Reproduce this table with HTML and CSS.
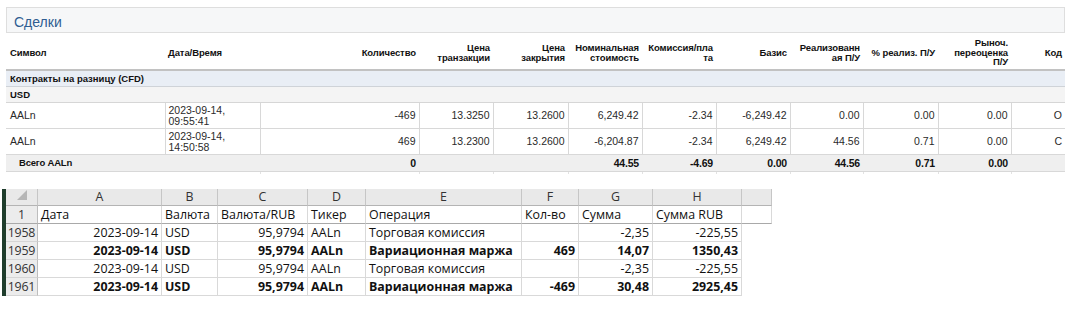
FILE: index.html
```html
<!DOCTYPE html>
<html lang="ru">
<head>
<meta charset="utf-8">
<title>Сделки</title>
<link rel="stylesheet" href="styles.css">
</head>
<body>
<section class="report">
  <div class="title">Сделки</div>
  <table class="deals">
    <colgroup>
      <col class="c-sym"><col class="c-date"><col class="c-qty"><col class="c-74"><col class="c-75"><col class="c-74"><col class="c-74"><col class="c-74"><col class="c-73"><col class="c-75"><col class="c-73"><col class="c-code">
    </colgroup>
    <thead>
      <tr>
        <th class="l">Символ</th>
        <th class="l">Дата/Время</th>
        <th>Количество</th>
        <th>Цена<br>транзакции</th>
        <th>Цена<br>закрытия</th>
        <th>Номинальная<br>стоимость</th>
        <th>Комиссия/пла<br>та</th>
        <th>Базис</th>
        <th>Реализованн<br>ая П/У</th>
        <th>% реализ. П/У</th>
        <th>Рыноч.<br>переоценка<br>П/У</th>
        <th>Код</th>
      </tr>
    </thead>
    <tbody>
      <tr class="asset"><td colspan="12">Контракты на разницу (CFD)</td></tr>
      <tr class="cur"><td colspan="12">USD</td></tr>
      <tr class="row">
        <td class="l">AALn</td>
        <td class="l date">2023-09-14,<br>09:55:41</td>
        <td>-469</td>
        <td>13.3250</td>
        <td>13.2600</td>
        <td>6,249.42</td>
        <td>-2.34</td>
        <td>-6,249.42</td>
        <td>0.00</td>
        <td>0.00</td>
        <td>0.00</td>
        <td>O</td>
      </tr>
      <tr class="row">
        <td class="l">AALn</td>
        <td class="l date">2023-09-14,<br>14:50:58</td>
        <td>469</td>
        <td>13.2300</td>
        <td>13.2600</td>
        <td>-6,204.87</td>
        <td>-2.34</td>
        <td>6,249.42</td>
        <td>44.56</td>
        <td>0.71</td>
        <td>0.00</td>
        <td>C</td>
      </tr>
      <tr class="total">
        <td class="l ind">Всего AALn</td>
        <td></td>
        <td>0</td>
        <td></td>
        <td></td>
        <td>44.55</td>
        <td>-4.69</td>
        <td>0.00</td>
        <td>44.56</td>
        <td>0.71</td>
        <td>0.00</td>
        <td></td>
      </tr>
      <tr class="tail"><td></td><td></td><td></td><td></td><td></td><td></td><td></td><td></td><td></td><td></td><td></td><td></td></tr>
    </tbody>
  </table>
</section>

<section class="sheet">
  <div class="grid">
    <div class="hd corner"><svg width="10" height="10" viewBox="0 0 10 10"><polygon points="10,0 10,10 0,10" fill="#b6b6b6"/></svg></div>
    <div class="hd">A</div><div class="hd">B</div><div class="hd">C</div><div class="hd">D</div><div class="hd">E</div><div class="hd">F</div><div class="hd">G</div><div class="hd">H</div><div class="hd"></div>

    <div class="rn frz">1</div>
    <div class="cell frz">Дата</div><div class="cell frz">Валюта</div><div class="cell frz">Валюта/RUB</div><div class="cell frz">Тикер</div><div class="cell frz">Операция</div><div class="cell frz">Кол-во</div><div class="cell frz">Сумма</div><div class="cell frz">Сумма RUB</div><div class="cell frz"></div>

    <div class="rn">1958</div>
    <div class="cell r">2023-09-14</div><div class="cell">USD</div><div class="cell r">95,9794</div><div class="cell">AALn</div><div class="cell">Торговая комиссия</div><div class="cell r"></div><div class="cell r">-2,35</div><div class="cell r">-225,55</div><div class="blank"></div>

    <div class="rn">1959</div>
    <div class="cell r b">2023-09-14</div><div class="cell b">USD</div><div class="cell r b">95,9794</div><div class="cell b">AALn</div><div class="cell b">Вариационная маржа</div><div class="cell r b">469</div><div class="cell r b">14,07</div><div class="cell r b">1350,43</div><div class="blank"></div>

    <div class="rn">1960</div>
    <div class="cell r">2023-09-14</div><div class="cell">USD</div><div class="cell r">95,9794</div><div class="cell">AALn</div><div class="cell">Торговая комиссия</div><div class="cell r"></div><div class="cell r">-2,35</div><div class="cell r">-225,55</div><div class="blank"></div>

    <div class="rn">1961</div>
    <div class="cell r b">2023-09-14</div><div class="cell b">USD</div><div class="cell r b">95,9794</div><div class="cell b">AALn</div><div class="cell b">Вариационная маржа</div><div class="cell r b">-469</div><div class="cell r b">30,48</div><div class="cell r b">2925,45</div><div class="blank"></div>
  </div>
</section>
</body>
</html>
```

FILE: styles.css
```css
* { box-sizing: border-box; }

body {
  margin: 0;
  background: #fff;
  font-family: "Liberation Sans", Arial, sans-serif;
  color: #1a1a1a;
}

/* ---------- report (top) ---------- */
.report {
  padding: 7px 0 0 6px;
  width: 1065px;
}

.title {
  height: 26px;
  padding: 5px 7px 0;
  border: 1px solid #dedede;
  background: #f6f7f8;
  color: #2f5d91;
  font-size: 14px;
  line-height: 19px;
}

.deals {
  width: 1059px;
  border-collapse: collapse;
  table-layout: fixed;
  font-size: 10.5px;
}

.c-sym { width: 159px; }
.c-date { width: 95px; }
.c-qty { width: 159px; }
.c-74 { width: 74px; }
.c-75 { width: 75px; }
.c-73 { width: 73px; }
.c-code { width: 54px; }

.deals th {
  height: 37px;
  padding: 3px 3px 0;
  font-size: 9.5px;
  font-weight: bold;
  line-height: 9.5px;
  text-align: right;
  vertical-align: middle;
  color: #111;
  letter-spacing: -0.1px;
  border-bottom: 2px solid #c2c2c2;
  white-space: nowrap;
}

.deals th.l { text-align: left; }
.deals th:first-child { padding-left: 4px; }

.deals td {
  padding: 0 3px;
  text-align: right;
  vertical-align: middle;
  white-space: nowrap;
}

.deals td.l { text-align: left; }

.asset td {
  height: 16px;
  background: #e9eef5;
  border-bottom: 1px solid #cfd3d8;
  font-size: 9.5px;
  font-weight: bold;
  text-align: left;
  padding-left: 4px;
  color: #111;
}

.cur td {
  height: 16px;
  background: #f4f4f4;
  border-bottom: 1px solid #d6d6d6;
  font-size: 9.5px;
  font-weight: bold;
  text-align: left;
  padding-left: 4px;
  color: #111;
}

.row td {
  height: 26px;
  border-bottom: 1px solid #d8d8d8;
  border-right: 1px solid #d8d8d8;
  color: #2a2a2a;
}

.row td:last-child { border-right: none; }
.row td:first-child { padding-left: 4px; }

.row td.date {
  line-height: 11px;
  padding-top: 1px;
}

.total td {
  height: 17px;
  background: #efefef;
  border-bottom: 1px solid #d8d8d8;
  font-size: 10.5px;
  font-weight: bold;
  color: #111;
  letter-spacing: -0.2px;
}

.total td.ind { padding-left: 13px; font-size: 9.5px; }

.tail td {
  height: 3px;
  padding: 0;
  border-right: 1px solid #e2e2e2;
}
.tail td:first-child { border-right: none; }
.tail td:last-child { border-right: none; }

/* ---------- spreadsheet (bottom) ---------- */
.sheet {
  margin: 15px 0 0 2px;
  display: flex;
}

.grid {
  display: grid;
  grid-template-columns: 32px 124px 56px 90px 58px 156px 57px 74px 89px 30px;
  grid-template-rows: 17px repeat(5, 18px);
  border-left: 4px solid #1f3d2c;
  font-family: "Open Sans", "Noto Sans", sans-serif;
  font-size: 12.4px;
  color: #111;
}

.hd {
  background: #e9e9e9;
  border-right: 1px solid #c6c6c6;
  border-bottom: 1px solid #b4b4b4;
  color: #333;
  text-align: center;
  line-height: 16px;
}

.corner {
  display: flex;
  justify-content: flex-end;
  align-items: flex-end;
  padding: 0 10px 5px 0;
}

.corner svg { display: block; }

.rn {
  background: #ececec;
  border-right: 1px solid #bdbdbd;
  border-bottom: 1px solid #d5d5d5;
  color: #333;
  text-align: center;
  line-height: 17px;
  letter-spacing: -0.2px;
}

.cell {
  border-right: 1px solid #d9d9d9;
  border-bottom: 1px solid #d9d9d9;
  padding: 0 3px;
  line-height: 17px;
  white-space: nowrap;
  overflow: hidden;
}

.frz { border-bottom: 1px solid #a9a9a9; }

.r { text-align: right; }
.b { font-weight: bold; }

.blank { background: #fff; }
```
